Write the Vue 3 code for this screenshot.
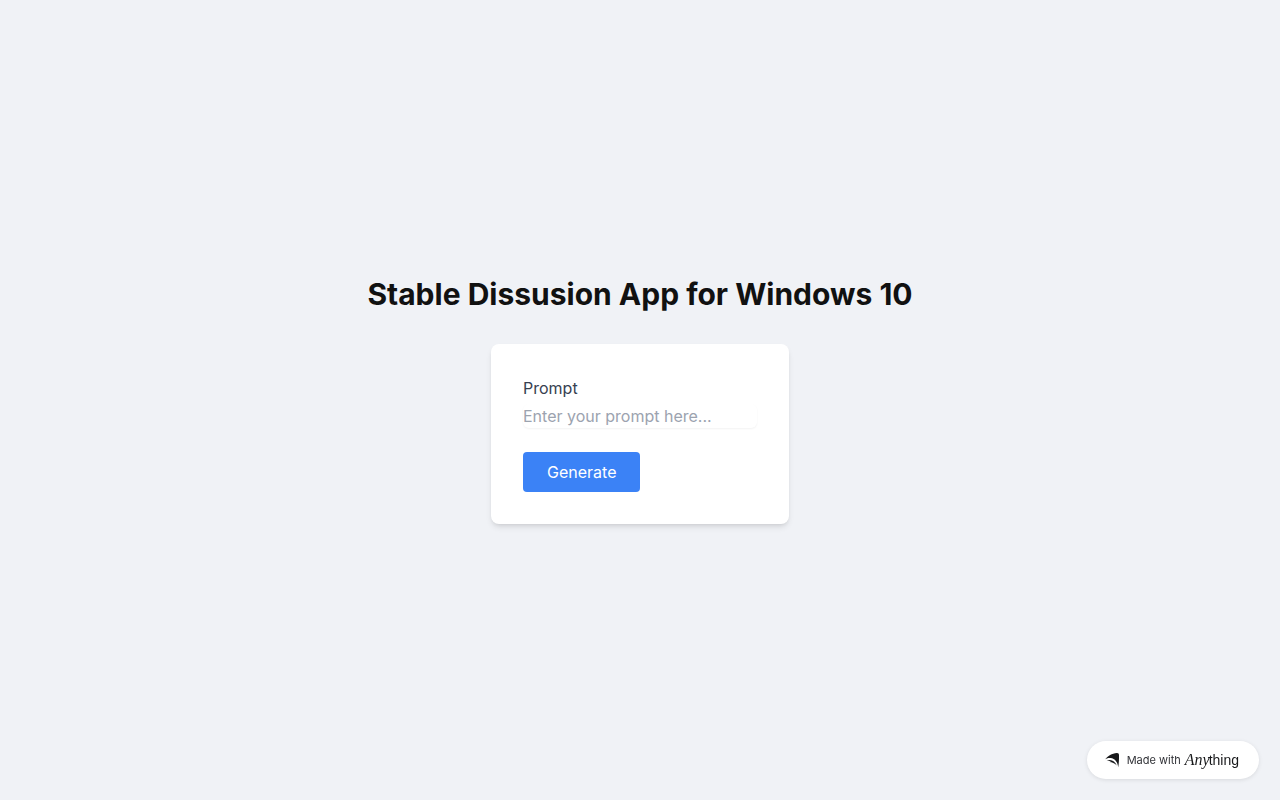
<script setup>
import { ref } from 'vue'

const prompt = ref('')
</script>

<template>
  <main class="page">
    <h1 class="title">Stable Dissusion App for Windows 10</h1>
    <form class="card" @submit.prevent>
      <div class="field">
        <label class="label" for="prompt">Prompt</label>
        <input
          id="prompt"
          v-model="prompt"
          class="input"
          type="text"
          placeholder="Enter your prompt here..."
        />
      </div>
      <button class="generate" type="submit">Generate</button>
    </form>
    <a class="badge" href="#">
      <svg class="mark" viewBox="0 0 16 16" aria-hidden="true">
        <path d="M1 7.400C3.800 3.800 8 1.200 12.800.9c1.500-.1 2.200.8 2.200 2.300.1 4.400-.1 8.300-.8 12.100-.4-5.100-3.200-8.700-7.600-9.300C4.300 5.700 2.600 6.200 1 7.400Z" />
        <path d="M2.600 8.700c4.400-2 8.300.1 10.200 4.800-2.200-2.500-4.500-3.500-7.400-3.600l1.800-.6c-1.400-.6-3-.8-4.600-.6Z" />
      </svg>
      <span class="made">Made with</span>
      <span class="wordmark"><span class="any">Any</span><span class="thing">thing</span></span>
    </a>
  </main>
</template>

<style>
body {
  margin: 0;
}
</style>

<style scoped>
.page {
  box-sizing: border-box;
  min-height: 100vh;
  display: flex;
  flex-direction: column;
  align-items: center;
  justify-content: center;
  background: #f0f2f6;
  color: #111111;
  font-family: Inter, sans-serif;
  font-size: 16px;
  line-height: 24px;
}

.title {
  margin: 0 0 32px;
  font-size: 30px;
  line-height: 36px;
  font-weight: 700;
}

.card {
  padding: 32px;
  border-radius: 8px;
  background: #ffffff;
  box-shadow: 0 4px 6px -1px rgba(0, 0, 0, 0.1), 0 2px 4px -2px rgba(0, 0, 0, 0.1);
}

.field {
  margin-bottom: 24px;
}

.label {
  display: block;
  margin-bottom: 4px;
  color: #374151;
}

.input {
  display: block;
  width: 234px;
  padding: 0;
  border: 0;
  border-radius: 6px;
  background: #ffffff;
  color: #111111;
  font: inherit;
  box-shadow: 0 1px 2px 0 rgba(0, 0, 0, 0.05);
}

.input::placeholder {
  color: #9ca3af;
  opacity: 1;
}

.generate {
  padding: 8px 24px;
  border: 0;
  border-radius: 4px;
  background: #3b82f6;
  color: #ffffff;
  font: inherit;
  cursor: pointer;
}

.badge {
  position: fixed;
  right: 21px;
  bottom: 21px;
  box-sizing: border-box;
  height: 38px;
  padding: 0 20px 0 17px;
  display: flex;
  align-items: center;
  border-radius: 19px;
  background: #ffffff;
  color: #18191b;
  text-decoration: none;
  box-shadow: 0 1px 4px rgba(0, 0, 0, 0.1);
}

.mark {
  width: 16px;
  height: 16px;
  margin-right: 7px;
  fill: currentColor;
}

.made {
  margin-right: 4px;
  color: #303136;
  font-size: 11px;
  line-height: 16px;
}

.wordmark {
  display: flex;
  align-items: baseline;
  line-height: 20px;
}

.any {
  margin-right: -1px;
  font-family: "Liberation Serif", serif;
  font-size: 16px;
  font-style: italic;
}

.thing {
  font-family: "Liberation Sans", sans-serif;
  font-size: 14px;
}
</style>
